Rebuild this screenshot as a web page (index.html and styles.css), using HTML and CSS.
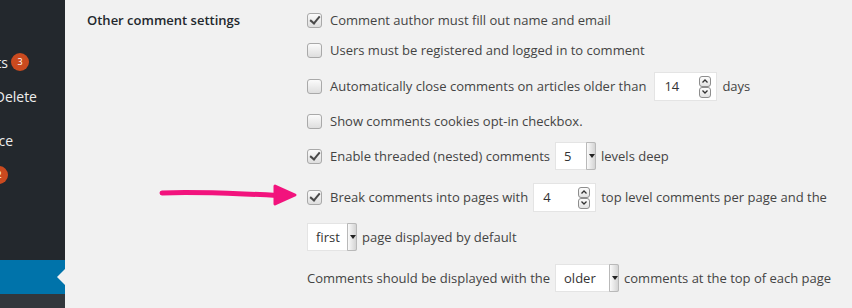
FILE: index.html
```html
<!DOCTYPE html>
<html lang="en">
<head>
    <meta charset="UTF-8">
    <title>Discussion Settings</title>
    <link rel="stylesheet" href="styles.css">
</head>
<body>
    <div class="admin">
        <div class="sidebar">
            <div class="menu">
                <div class="menu-item item-comments">Comments <span class="badge">3</span></div>
                <div class="menu-item item-bulk">Bulk Delete</div>
                <div class="menu-item item-appearance">Appearance</div>
                <div class="menu-item item-plugins">Plugins <span class="badge">2</span></div>
                <div class="menu-item current"></div>
                <div class="submenu"></div>
            </div>
        </div>

        <div class="main">
            <div class="settings-row">
                <div class="row-title">Other comment settings</div>
                <div class="fields">
                    <label class="field h30"><span class="check on"></span>Comment author must fill out name and email</label>
                    <label class="field h30"><span class="check"></span>Users must be registered and logged in to comment</label>
                    <label class="field h42"><span class="check"></span>Automatically close comments on articles older than
                        <span class="number w63 ml4">14<span class="spin">
                            <i><svg width="8" height="6" viewBox="0 0 8 6"><polyline points="1.5,4.5 4,2 6.5,4.5" fill="none" stroke="#333" stroke-width="1.3"/></svg></i>
                            <i><svg width="8" height="6" viewBox="0 0 8 6"><polyline points="1.5,1.5 4,4 6.5,1.5" fill="none" stroke="#333" stroke-width="1.3"/></svg></i>
                        </span></span> days</label>
                    <label class="field h28"><span class="check"></span>Show comments cookies opt-in checkbox.</label>
                    <label class="field h42"><span class="check on"></span>Enable threaded (nested) comments
                        <span class="select w41">5<span class="drop"></span></span> levels deep</label>
                    <label class="field h40"><span class="check on"></span>Break comments into pages with
                        <span class="number w63">4<span class="spin">
                            <i><svg width="8" height="6" viewBox="0 0 8 6"><polyline points="1.5,4.5 4,2 6.5,4.5" fill="none" stroke="#333" stroke-width="1.3"/></svg></i>
                            <i><svg width="8" height="6" viewBox="0 0 8 6"><polyline points="1.5,1.5 4,4 6.5,1.5" fill="none" stroke="#333" stroke-width="1.3"/></svg></i>
                        </span></span> top level comments per page and the</label>
                    <div class="field h40"><span class="select w50">first<span class="drop"></span></span> page displayed by default</div>
                    <div class="field h42">Comments should be displayed with the
                        <span class="select w64">older<span class="drop"></span></span> comments at the top of each page</div>
                </div>
            </div>
        </div>
    </div>

    <!-- hand drawn pointer -->
    <svg class="pointer" width="150" height="30" viewBox="0 0 150 30">
        <path d="M3 9 C30 8 60 9 85 10 C100 10.5 110 11 118 11.5" stroke="#f2137d" stroke-width="5" stroke-linecap="round" fill="none"/>
        <path d="M116 2 L136 11 L116 20 Z" fill="#f2137d" stroke="#f2137d" stroke-width="3" stroke-linejoin="round"/>
    </svg>
</body>
</html>
```

FILE: styles.css
```css
* {
    margin: 0;
    padding: 0;
    box-sizing: border-box;
}
body {
    background: #f1f1f1;
    font-family: "Open Sans", "Noto Sans", sans-serif;
    font-size: 13px;
    color: #444;
    overflow: hidden;
}
.admin {
    display: flex;
    height: 308px;
}

/* Left admin menu (only its right edge is visible) */
.sidebar {
    width: 65px;
    flex-shrink: 0;
    background: #23282d;
    overflow: hidden;
}
.menu {
    padding-top: 45px;
    height: 100%;
    display: flex;
    flex-direction: column;
}
.menu-item {
    height: 34px;
    display: flex;
    align-items: center;
    justify-content: flex-end;
    white-space: nowrap;
    color: #eee;
    font-size: 14px;
    position: relative;
}
.item-comments { padding-right: 36px; }
.item-bulk { padding-right: 28px; }
.item-appearance { margin-top: 10px; padding-right: 52px; }
.item-plugins { margin-top: 1px; padding-right: 57px; }
.badge {
    display: inline-block;
    flex-shrink: 0;
    width: 18px;
    height: 18px;
    line-height: 18px;
    border-radius: 50%;
    background: #ca4a1f;
    color: #fff;
    font-size: 9px;
    text-align: center;
    margin-left: 3px;
}
.menu-item.current {
    margin-top: 68px;
    background: #0073aa;
}
.menu-item.current::after {
    content: "";
    position: absolute;
    right: 0;
    top: 9px;
    border: 8px solid transparent;
    border-right-color: #f1f1f1;
}
.submenu {
    flex: 1;
    background: #32373c;
}

/* Settings table */
.main {
    flex: 1;
    padding: 5px 0 0 22px;
}
.settings-row {
    display: flex;
}
.row-title {
    width: 220px;
    flex-shrink: 0;
    height: 30px;
    line-height: 30px;
    font-weight: 600;
    font-size: 13px;
    color: #23282d;
}
.fields {
    display: flex;
    flex-direction: column;
}
.field {
    display: flex;
    align-items: center;
    white-space: nowrap;
    gap: 5px;
}
.h28 { height: 28px; }
.h30 { height: 30px; }
.h40 { height: 40px; }
.h42 { height: 42px; }
.ml4 { margin-left: 3px; }

.check {
    width: 15px;
    height: 15px;
    margin-right: 3px;
    border: 1px solid #a9a9a9;
    border-radius: 3px;
    background: linear-gradient(#fbfbfb, #dedede);
    flex-shrink: 0;
    position: relative;
}
.check.on::after {
    content: "";
    position: absolute;
    left: 4px;
    top: 0px;
    width: 4px;
    height: 8px;
    border: solid #4a4a4a;
    border-width: 0 2.5px 2.5px 0;
    transform: rotate(40deg);
}

.number, .select {
    display: inline-flex;
    align-items: center;
    background: #fff;
    border: 1px solid #e4e4e4;
    color: #333;
    position: relative;
    font-size: 13px;
}
.number {
    height: 29px;
    padding-left: 9px;
}
.select {
    height: 28px;
    padding-left: 8px;
}
.w41 { width: 41px; }
.w50 { width: 50px; }
.w63 { width: 63px; }
.w64 { width: 64px; }

.spin {
    position: absolute;
    right: 5px;
    top: 3px;
    display: flex;
    flex-direction: column;
}
.spin i {
    width: 12px;
    height: 11px;
    border: 1px solid #8d8d8d;
    border-radius: 3px;
    background: linear-gradient(#fcfcfc, #e2e2e2);
    display: flex;
    align-items: center;
    justify-content: center;
}
.drop {
    position: absolute;
    right: -1px;
    top: -1px;
    width: 10px;
    height: 28px;
    border: 1px solid #b9b9b9;
    border-radius: 0 2px 2px 0;
    background: linear-gradient(90deg, #fafafa, #d4d4d4);
}
.drop::after {
    content: "";
    position: absolute;
    left: 2px;
    top: 11px;
    border: 3px solid transparent;
    border-top: 4px solid #222;
}

.pointer {
    position: absolute;
    left: 159px;
    top: 184px;
}
```
